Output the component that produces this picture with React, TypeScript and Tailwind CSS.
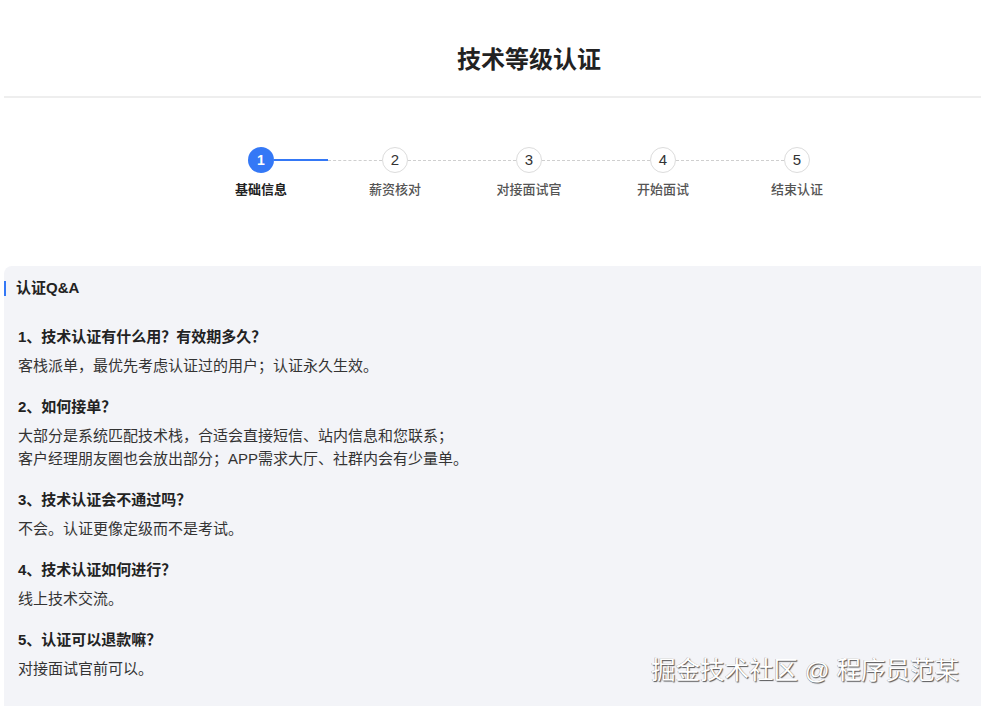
const steps = ["基础信息", "薪资核对", "对接面试官", "开始面试", "结束认证"];

const faqs: { q: string; a: string[] }[] = [
  { q: "1、技术认证有什么用？有效期多久？", a: ["客栈派单，最优先考虑认证过的用户；认证永久生效。"] },
  {
    q: "2、如何接单？",
    a: ["大部分是系统匹配技术栈，合适会直接短信、站内信息和您联系；", "客户经理朋友圈也会放出部分；APP需求大厅、社群内会有少量单。"],
  },
  { q: "3、技术认证会不通过吗？", a: ["不会。认证更像定级而不是考试。"] },
  { q: "4、技术认证如何进行？", a: ["线上技术交流。"] },
  { q: "5、认证可以退款嘛？", a: ["对接面试官前可以。"] },
];

function Stepper({ current }: { current: number }) {
  return (
    <div className="flex flex-col items-center pt-[49px]">
      <div className="flex items-center">
        {steps.map((_, i) => {
          const active = i === current;
          return (
            <div key={i} className="flex items-center">
              <div
                className={
                  active
                    ? "flex h-[26px] w-[26px] items-center justify-center rounded-full bg-[#3478f6] text-[14px] font-bold text-white"
                    : "flex h-[26px] w-[26px] items-center justify-center rounded-full border border-[#dcdcdc] bg-white text-[15px] font-medium text-[#333]"
                }
              >
                {i + 1}
              </div>
              {i < steps.length - 1 && (
                <div className="flex w-[108px] items-center">
                  {i === current ? (
                    <>
                      <div className="h-[2px] w-[54px] bg-[#3478f6]" />
                      <div className="w-[54px] border-t border-dashed border-[#cfcfcf]" />
                    </>
                  ) : (
                    <div className="w-[108px] border-t border-dashed border-[#cfcfcf]" />
                  )}
                </div>
              )}
            </div>
          );
        })}
      </div>
      <div className="mt-[8px] grid grid-cols-[repeat(5,134px)]">
        {steps.map((s, i) => (
          <div
            key={s}
            className={
              i === current
                ? "text-center text-[13px] leading-[18px] font-bold text-[#222]"
                : "text-center text-[13px] leading-[18px] font-medium text-[#555]"
            }
          >
            {s}
          </div>
        ))}
      </div>
    </div>
  );
}

export default function App() {
  return (
    <div className="relative h-[706px] w-[981px] overflow-hidden bg-white font-['Liberation_Sans','Noto_Sans_CJK_SC',sans-serif]">
      <div className="ml-[4px] w-[1050px]">
        <div className="h-[98px] border-b-2 border-[#eeeeee] pt-[46px] text-center text-[24px] leading-[28px] font-bold text-[#222]">
          技术等级认证
        </div>
        <Stepper current={0} />
        <div className="mt-[67px] rounded-tl-[8px] bg-[#f3f4f8] pt-[11px] pb-[40px]">
          <div className="flex items-center">
            <div className="mt-[1px] h-[15px] w-[2px] bg-[#3478f6]" />
            <div className="ml-[10px] text-[15px] leading-[22px] font-semibold text-[#222]">认证Q&amp;A</div>
          </div>
          <div className="mt-[27px] pl-[14px]">
            {faqs.map((f) => (
              <div key={f.q} className="mb-[19px]">
                <div className="text-[15px] leading-[22px] font-bold text-[#222]">{f.q}</div>
                <div className="mt-[6px]">
                  {f.a.map((line) => (
                    <div key={line} className="text-[15px] leading-[23px] text-[#333]">
                      {line}
                    </div>
                  ))}
                </div>
              </div>
            ))}
          </div>
        </div>
      </div>
      <div className="absolute top-[656px] left-[651px] text-[24.5px] leading-[30px] whitespace-nowrap text-white [text-shadow:1px_1px_1px_rgba(0,0,0,0.65),-0.5px_-0.5px_0.5px_rgba(0,0,0,0.35)]">
        掘金技术社区 @ 程序员范某
      </div>
    </div>
  );
}
